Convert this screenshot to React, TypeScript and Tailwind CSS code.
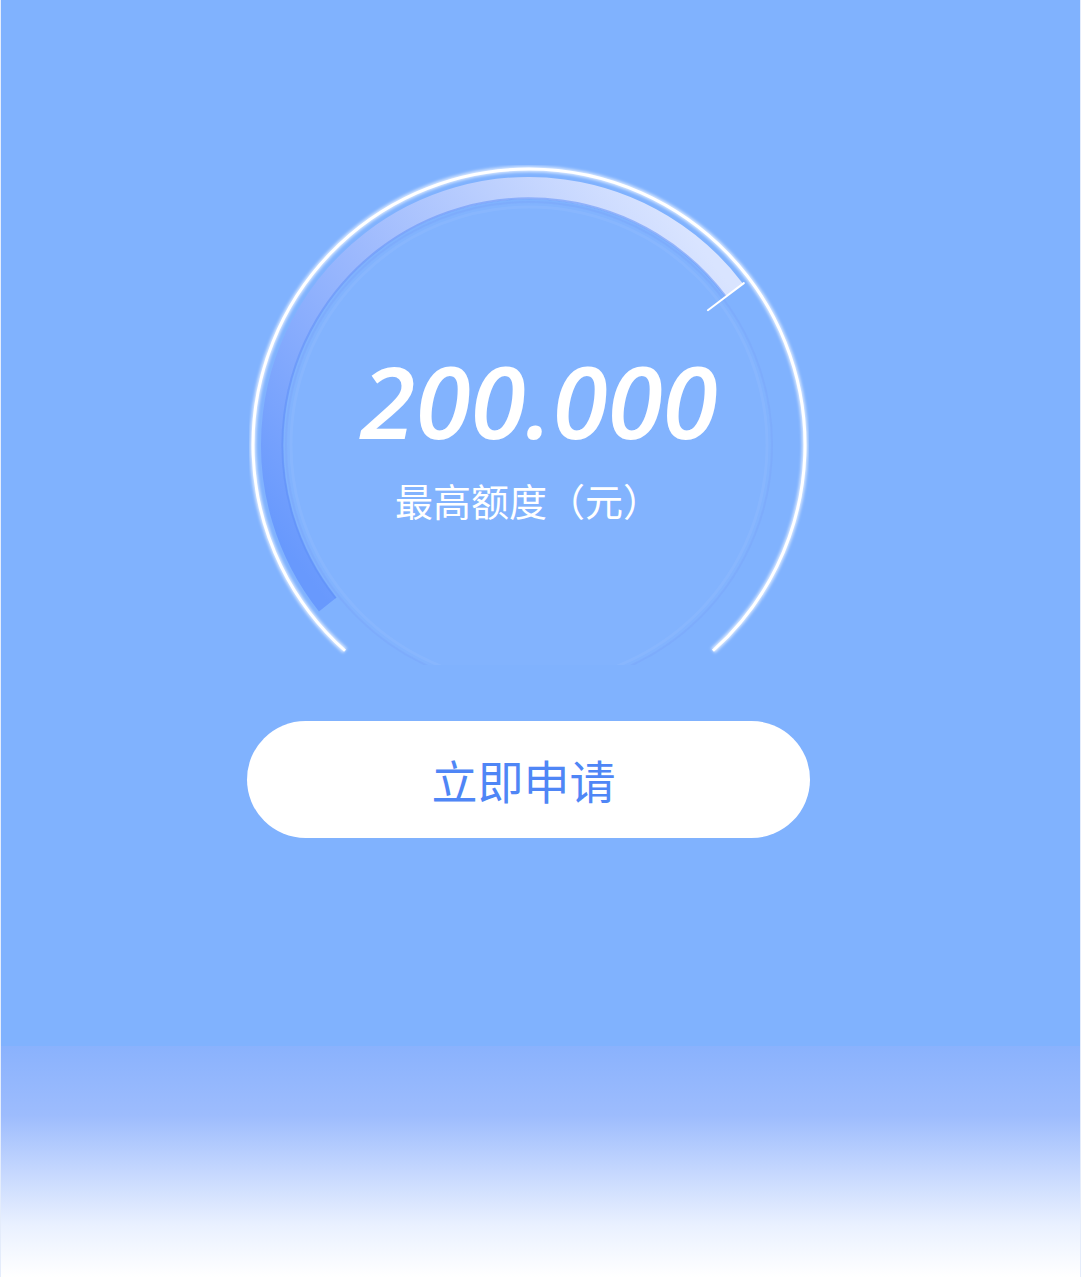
import React from "react";

// gauge geometry (svg coords, centre 280/280)
const C = 280;

function arcPath(r: number, a0: number, a1: number) {
  const rad = (d: number) => (d * Math.PI) / 180;
  const x0 = C + r * Math.cos(rad(a0));
  const y0 = C + r * Math.sin(rad(a0));
  const x1 = C + r * Math.cos(rad(a1));
  const y1 = C + r * Math.sin(rad(a1));
  const large = a1 - a0 > 180 ? 1 : 0;
  return `M ${x0.toFixed(2)} ${y0.toFixed(2)} A ${r} ${r} 0 ${large} 1 ${x1.toFixed(2)} ${y1.toFixed(2)}`;
}

function Gauge() {
  const endA = (323 * Math.PI) / 180;
  return (
    <svg width="560" height="500" viewBox="0 0 560 500" className="block">
      <defs>
        <linearGradient id="band" gradientUnits="userSpaceOnUse" x1="80" y1="440" x2="486" y2="126">
          <stop offset="0" stopColor="#6899fd" />
          <stop offset="0.45" stopColor="#9bb8fd" />
          <stop offset="1" stopColor="#d9e4ff" />
        </linearGradient>
        <filter id="glow" x="-10%" y="-10%" width="120%" height="120%">
          <feGaussianBlur stdDeviation="1.5" />
        </filter>
      </defs>

      {/* faint inner disc */}
      <circle cx={C} cy={C} r="243" fill="rgba(255,255,255,0.02)" stroke="rgba(120,160,250,0.3)" strokeWidth="2" />
      <circle cx={C} cy={C} r="238" fill="none" stroke="rgba(255,255,255,0.05)" strokeWidth="3" />

      {/* progress band */}
      <path d={arcPath(257, 141.6, 323)} fill="none" stroke="url(#band)" strokeWidth="22" />
      <path d={arcPath(246.5, 141.6, 323)} fill="none" stroke="#5f90f8" strokeOpacity="0.55" strokeWidth="2" />

      {/* end tick */}
      <line
        x1={C + 224 * Math.cos(endA)}
        y1={C + 224 * Math.sin(endA)}
        x2={C + 269 * Math.cos(endA)}
        y2={C + 269 * Math.sin(endA)}
        stroke="#ffffff"
        strokeWidth="2"
        strokeLinecap="round"
      />

      {/* outer white ring */}
      <path d={arcPath(276, 131.8, 408.2)} fill="none" stroke="#ffffff" strokeOpacity="0.7" strokeWidth="6" filter="url(#glow)" />
      <path d={arcPath(276, 131.8, 408.2)} fill="none" stroke="#ffffff" strokeWidth="3" />
    </svg>
  );
}

export default function App() {
  return (
    <div className="w-[1081px] h-[1277px] bg-[#80b2fe] border-x border-[#e4ecfb] flex flex-col overflow-hidden">

      {/* GAUGE */}
      <div className="relative mt-[165px] ml-[248px] w-[560px] h-[500px]">
        <Gauge />

        <div
          className="absolute left-[90px] top-[185px] w-[400px] text-center text-white italic font-semibold text-[100px] leading-none"
          style={{ fontFamily: '"Open Sans", "Noto Sans", sans-serif' }}
        >
          200.000
        </div>

        <div
          className="absolute left-[146px] top-[316px] whitespace-nowrap text-white text-[38px] leading-none"
          style={{ fontFamily: '"Noto Sans CJK SC", "Noto Sans", sans-serif' }}
        >
          最高额度（元）
        </div>
      </div>

      {/* BUTTON */}
      <button
        className="mt-[56px] ml-[246px] w-[563px] h-[117px] rounded-full bg-white flex items-center justify-center pr-[10px] text-[#4f86f6] text-[46px] font-normal"
        style={{ fontFamily: '"Noto Sans CJK SC", "Noto Sans", sans-serif' }}
      >
        立即申请
      </button>

      <div className="flex-1" />

      {/* BOTTOM FADE */}
      <div className="h-[231px] bg-[linear-gradient(to_bottom,#8ab2fd_0%,#9dbcfd_30%,#c6d8fe_55%,#eaf1ff_78%,#ffffff_100%)]" />
    </div>
  );
}
